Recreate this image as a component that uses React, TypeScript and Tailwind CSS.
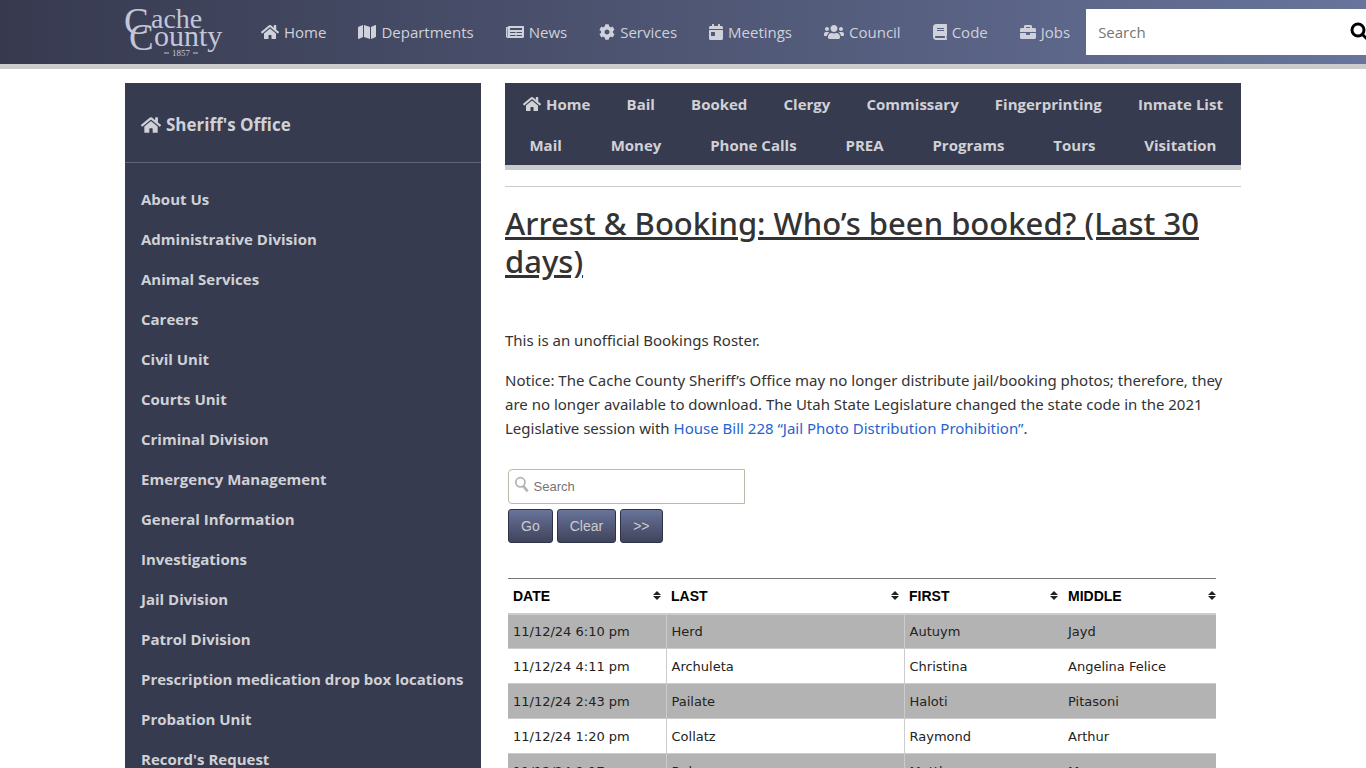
import {
  FaBook,
  FaBriefcase,
  FaCalendarDay,
  FaCog,
  FaHome,
  FaMap,
  FaNewspaper,
  FaUsers,
} from "react-icons/fa";

const navItems = [
  { name: "Home", icon: FaHome, size: "h-4 w-[18px]" },
  { name: "Departments", icon: FaMap, size: "h-4 w-[18px]" },
  { name: "News", icon: FaNewspaper, size: "h-4 w-[18px]" },
  { name: "Services", icon: FaCog, size: "h-4 w-4" },
  { name: "Meetings", icon: FaCalendarDay, size: "h-4 w-[14px]" },
  { name: "Council", icon: FaUsers, size: "h-4 w-5" },
  { name: "Code", icon: FaBook, size: "h-4 w-[14px]" },
  { name: "Jobs", icon: FaBriefcase, size: "h-4 w-4" },
];

const sideItems = [
  "About Us",
  "Administrative Division",
  "Animal Services",
  "Careers",
  "Civil Unit",
  "Courts Unit",
  "Criminal Division",
  "Emergency Management",
  "General Information",
  "Investigations",
  "Jail Division",
  "Patrol Division",
  "Prescription medication drop box locations",
  "Probation Unit",
  "Record's Request",
];

const jailRowOne = ["Home", "Bail", "Booked", "Clergy", "Commissary", "Fingerprinting", "Inmate List"];
const jailRowTwo = ["Mail", "Money", "Phone Calls", "PREA", "Programs", "Tours", "Visitation"];

const columns = ["DATE", "LAST", "FIRST", "MIDDLE"];
const bookings = [
  ["11/12/24 6:10 pm", "Herd", "Autuym", "Jayd"],
  ["11/12/24 4:11 pm", "Archuleta", "Christina", "Angelina Felice"],
  ["11/12/24 2:43 pm", "Pailate", "Haloti", "Pitasoni"],
  ["11/12/24 1:20 pm", "Collatz", "Raymond", "Arthur"],
  ["11/12/24 9:17 am", "Baker", "Matthew", "M"],
];

const Logo = () => (
  <svg width="100" height="50" viewBox="0 0 100 50" fill="#c3c6d6" className="overflow-visible font-['Liberation_Serif',serif]" aria-label="Cache County 1857">
    <text x="-1" y="27" fontSize="37">C</text>
    <text x="26" y="21" fontSize="28">ache</text>
    <text x="4" y="43" fontSize="37">C</text>
    <text x="29" y="39" fontSize="30">ounty</text>
    <text x="47" y="49" fontSize="9">1857</text>
    <path d="M39 46h5M68 46h5" stroke="#c3c6d6" />
  </svg>
);

const SortIcon = () => (
  <svg width="8" height="9" viewBox="0 0 8 9" fill="#222222">
    <path d="M4 0l4 4H0zM4 9l4-4H0z" />
  </svg>
);

const Header = () => (
  <header className="overflow-hidden border-b-5 border-[#cccccc] bg-linear-to-r from-[#373a4f] to-[#68749b]">
    <div className="ml-[125px] flex h-16 items-center">
      <a href="#" className="shrink-0">
        <Logo />
      </a>
      <nav className="ml-5 flex shrink-0">
        {navItems.map(({ name, icon: Icon, size }) => (
          <a key={name} href="#" className="flex items-center gap-[5px] px-4 text-[15px] text-[#cfd2da]">
            <Icon className={size} />
            {name}
          </a>
        ))}
      </nav>
      <form className="flex h-[46px] shrink-0 items-center bg-white">
        <input type="search" aria-label="Search the site" placeholder="Search" className="w-[264px] px-3 text-[15px] outline-none placeholder:text-[#757575]" />
        <button type="button" aria-label="Search">
          <svg width="20" height="20" viewBox="0 0 20 20" fill="none" stroke="#000" strokeWidth="3">
            <circle cx="8" cy="8" r="6" />
            <path d="M12 12l6 6" />
          </svg>
        </button>
      </form>
    </div>
  </header>
);

const Sidebar = () => (
  <aside className="bg-[#363b4f] font-bold text-[#d0d1d6]">
    <a href="#" className="flex h-20 items-center gap-[5px] border-b border-[#62657a] px-4 pt-1 text-[17px]">
      <FaHome className="h-[18px] w-5" />
      Sheriff's Office
    </a>
    <ul className="pt-4">
      {sideItems.map((item) => (
        <li key={item}>
          <a href="#" className="flex h-10 items-center px-4 text-[15px] whitespace-nowrap">{item}</a>
        </li>
      ))}
    </ul>
  </aside>
);

const JailNav = () => (
  <nav className="border-b-5 border-[#cccccc] bg-[#363b4f] text-[15px] font-bold text-[#d0d1d6]">
    <ul className="flex h-[41px] items-center justify-around">
      {jailRowOne.map((item) => (
        <li key={item}>
          <a href="#" className="flex items-center gap-[5px]">
            {item === "Home" && <FaHome className="h-4 w-[18px]" />}
            {item}
          </a>
        </li>
      ))}
    </ul>
    <ul className="flex h-[41px] items-center justify-around">
      {jailRowTwo.map((item) => (
        <li key={item}>
          <a href="#">{item}</a>
        </li>
      ))}
    </ul>
  </nav>
);

const RosterSearch = () => (
  <form className="ml-[3px]">
    <label className="flex h-[35px] w-[237px] items-center gap-[5px] rounded-l-sm border border-[#bdb9a9] px-[5px]">
      <svg width="16" height="18" viewBox="0 0 16 18" fill="none" stroke="#b5b5b5" strokeWidth="2" className="mb-1">
        <circle cx="7" cy="6" r="5" />
        <path d="M10 10l5 6" strokeWidth="3" />
      </svg>
      <input type="text" aria-label="Search roster" placeholder="Search" className="w-full font-['Liberation_Sans',sans-serif] text-[13px] outline-none placeholder:text-[#757575]" />
    </label>
    <div className="mt-[5px] flex gap-1">
      {["Go", "Clear", ">>"].map((label) => (
        <button key={label} type="button" className="h-[34px] rounded-[3px] border border-[#2f3347] bg-linear-to-b from-[#68749b] to-[#40445c] px-3 font-['Liberation_Sans',sans-serif] text-sm text-[#cccccc]">
          {label}
        </button>
      ))}
    </div>
  </form>
);

const RosterTable = () => (
  <table className="mt-[35px] ml-[3px] w-[708px] table-fixed border-t border-[#777777] text-left">
    <colgroup>
      <col className="w-[158px]" />
      <col className="w-[238px]" />
      <col className="w-[159px]" />
      <col />
    </colgroup>
    <thead>
      <tr className="h-[35px] border-b-2 border-[#cccccc] font-['Liberation_Sans',sans-serif] text-sm text-black">
        {columns.map((column) => (
          <th key={column} className="pr-[5px] pl-[5px] last:pr-0">
            <div className="flex items-center justify-between">
              {column}
              <SortIcon />
            </div>
          </th>
        ))}
      </tr>
    </thead>
    <tbody className="font-['DejaVu_Sans',sans-serif] text-[13px] text-[#222222]">
      {bookings.map((row) => (
        <tr key={row[0]} className="h-[35px] border-b border-[#cccccc] odd:bg-[#b3b3b3]">
          {row.map((cell, index) => (
            <td key={index} className="border-r border-[#cccccc] pt-0.5 pl-[5px] nth-3:border-r-0 last:border-r-0">{cell}</td>
          ))}
        </tr>
      ))}
    </tbody>
  </table>
);

const App = () => {
  return (
    <div className="bg-white font-['Open_Sans',sans-serif] text-[15px] leading-6 text-[#333333]">
      <Header />
      <div className="mx-auto mt-[14px] grid max-w-[1140px] grid-cols-3 gap-6 px-3">
        <Sidebar />
        <main className="col-span-2">
          <JailNav />
          <hr className="mt-4 border-[#cccccc]" />
          <h1 className="mt-[17px] font-['Noto_Sans',sans-serif] text-[31px] leading-[38px] font-medium underline">
            Arrest &amp; Booking: Who’s been booked? (Last 30 days)
          </h1>
          <div className="mt-12 mb-[29px] space-y-4 font-['Noto_Sans',sans-serif]">
            <p>This is an unofficial Bookings Roster.</p>
            <p>
              Notice: The Cache County Sheriff’s Office may no longer distribute jail/booking photos; therefore, they
              are no longer available to download. The Utah State Legislature changed the state code in the 2021
              Legislative session with{" "}
              <a href="#" className="text-[#2663cf]">House Bill 228 “Jail Photo Distribution Prohibition”</a>.
            </p>
          </div>
          <RosterSearch />
          <RosterTable />
        </main>
      </div>
    </div>
  );
};

export default App;
